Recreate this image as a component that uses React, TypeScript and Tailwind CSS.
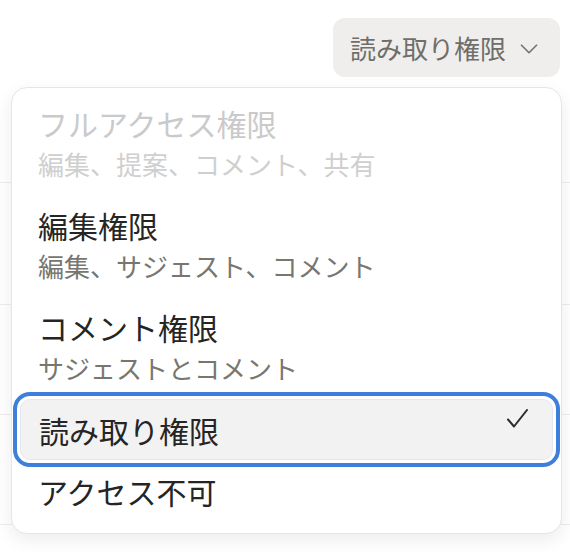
import { ChevronDown } from "lucide-react"

const font = { fontFamily: '"Noto Sans CJK JP", "Noto Sans", sans-serif' }

type Item = {
  title: string
  desc?: string
  disabled?: boolean
  selected?: boolean
}

const items: Item[] = [
  { title: "フルアクセス権限", desc: "編集、提案、コメント、共有", disabled: true },
  { title: "編集権限", desc: "編集、サジェスト、コメント" },
  { title: "コメント権限", desc: "サジェストとコメント" },
  { title: "読み取り権限", selected: true },
  { title: "アクセス不可" },
]

function Check() {
  return (
    <svg width="24" height="22" viewBox="0 0 24 22" fill="none" className="shrink-0">
      <path d="M2 11.5 L8 18.5 L21 2" stroke="#2b2b2b" strokeWidth="2" strokeLinecap="round" strokeLinejoin="round" />
    </svg>
  )
}

export default function App() {
  return (
    <div className="relative w-[570px] h-[552px] overflow-hidden bg-white" style={font}>
      {/* background table rows */}
      <div className="flex flex-col pt-[182px]">
        <div className="h-[122px] border-t border-[#ededed]" />
        <div className="h-[110px] border-t border-[#ededed]" />
        <div className="h-[110px] border-t border-[#ededed]" />
        <div className="h-[27px] border-t border-[#ededed]" />
      </div>

      {/* trigger */}
      <div className="absolute top-[18px] right-[10px]">
        <button
          type="button"
          className="flex items-center gap-[8px] h-[59px] pl-[17px] pr-[16px] rounded-[12px] bg-[#efeeec] text-[#6f6e6a] text-[26px] leading-none"
        >
          読み取り権限
          <ChevronDown size={30} strokeWidth={1.4} className="text-[#77766f] mt-[2px]" />
        </button>
      </div>

      {/* menu */}
      <div className="absolute top-[87px] left-[11px] w-[551px] rounded-[16px] bg-white border border-[#e6e6e6] shadow-[0_6px_18px_rgba(0,0,0,0.08)] pt-[5px] pb-[12px] px-[8px]">
        {items.map((it) => (
          <div
            key={it.title}
            className={
              it.selected
                ? "flex items-center justify-between h-[61px] pl-[18px] pr-[22px] rounded-[10px] bg-[#f2f2f2] border border-[#e3e8f0] outline-4 outline-[#3f7fdc] outline-offset-[3px]"
                : it.desc
                ? "flex flex-col justify-center h-[102px] pl-[18px] pr-[22px]"
                : "flex items-center h-[61px] pl-[18px] pr-[22px]"
            }
          >
            {it.desc ? (
              <>
                <div className={"text-[30px] leading-[39px] " + (it.disabled ? "text-[#cacaca]" : "text-[#252525]")}>
                  {it.title}
                </div>
                <div className={"text-[26px] leading-[41px] " + (it.disabled ? "text-[#cfcfcf]" : "text-[#77766f]")}>
                  {it.desc}
                </div>
              </>
            ) : (
              <>
                <div className="text-[30px] leading-[40px] text-[#252525]">{it.title}</div>
                {it.selected && (
                  <div className="-mt-[22px]">
                    <Check />
                  </div>
                )}
              </>
            )}
          </div>
        ))}
      </div>
    </div>
  )
}
